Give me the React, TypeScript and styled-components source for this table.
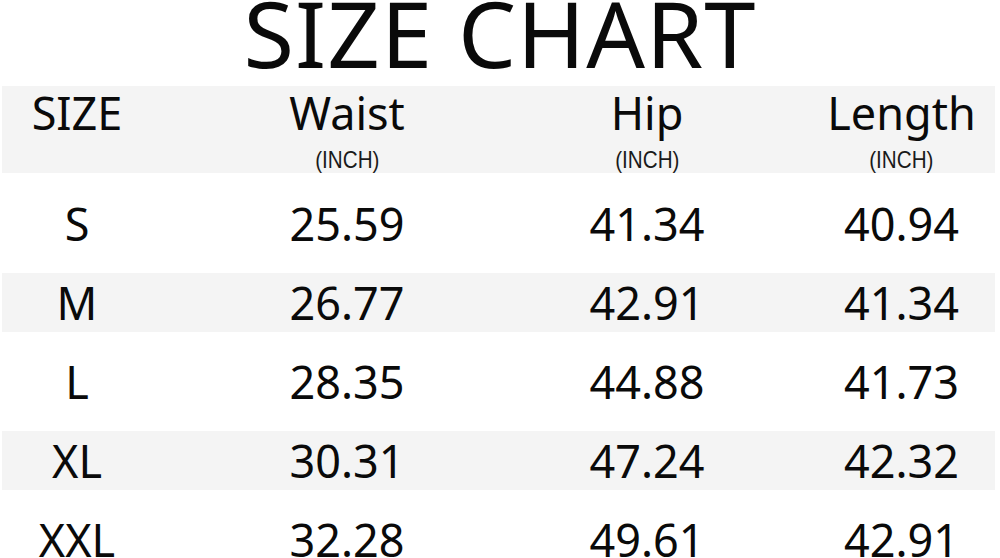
import styled, { createGlobalStyle } from 'styled-components'

const GlobalStyle = createGlobalStyle`
  html,
  body {
    margin: 0;
    padding: 0;
    background: #fff;
    overflow: hidden;
  }

  body {
    font-family: 'Noto Sans', 'Open Sans', sans-serif;
    color: #0a0a0a;
  }
`

const Page = styled.div`
  width: 1000px;
  height: 558px;
  display: flex;
  flex-direction: column;
  align-items: center;
`

const Title = styled.h1`
  margin: 0 0 20px;
  font-size: 92px;
  line-height: 66px;
  font-weight: 400;
  letter-spacing: 1px;
  text-align: center;
`

const Table = styled.div`
  align-self: flex-start;
  margin-left: 2px;
  width: 993px;
`

const Grid = styled.div`
  display: grid;
  grid-template-columns: 150px 390px 210px 1fr;
  align-items: center;
`

const HeaderRow = styled(Grid)`
  height: 87px;
  align-items: start;
  background: #f4f4f4;
`

const Body = styled.div`
  padding-top: 11px;
`

const Row = styled.div`
  height: 79px;
  display: flex;
  align-items: center;
`

const Band = styled(Grid)<{ $shaded: boolean }>`
  flex: 1;
  height: 59px;
  background: ${(p) => (p.$shaded ? '#f4f4f4' : 'transparent')};
`

const Cell = styled.div`
  display: flex;
  flex-direction: column;
  align-items: center;
  font-size: 45px;
  line-height: 45px;

  &:nth-child(4) {
    padding-left: 56px;
  }
`

const HeadCell = styled(Cell)`
  padding-top: 4px;
`

const Unit = styled.span`
  margin-top: 13px;
  font-family: 'Liberation Sans', Arial, sans-serif;
  font-size: 24px;
  line-height: 24px;
  color: #1a1a1a;
  transform: scaleX(0.86);
`

const headers = [
  { label: 'SIZE' },
  { label: 'Waist', unit: '(INCH)' },
  { label: 'Hip', unit: '(INCH)' },
  { label: 'Length', unit: '(INCH)' },
]

const rows = [
  ['S', '25.59', '41.34', '40.94'],
  ['M', '26.77', '42.91', '41.34'],
  ['L', '28.35', '44.88', '41.73'],
  ['XL', '30.31', '47.24', '42.32'],
  ['XXL', '32.28', '49.61', '42.91'],
]

export default function App() {
  return (
    <Page>
      <GlobalStyle />
      <Title>SIZE CHART</Title>

      <Table>
        <HeaderRow>
          {headers.map((h) => (
            <HeadCell key={h.label}>
              <span>{h.label}</span>
              {h.unit && <Unit>{h.unit}</Unit>}
            </HeadCell>
          ))}
        </HeaderRow>

        <Body>
          {rows.map((r, i) => (
            <Row key={r[0]}>
              <Band $shaded={i % 2 === 1}>
                {r.map((v, j) => (
                  <Cell key={j}>{v}</Cell>
                ))}
              </Band>
            </Row>
          ))}
        </Body>
      </Table>
    </Page>
  )
}
